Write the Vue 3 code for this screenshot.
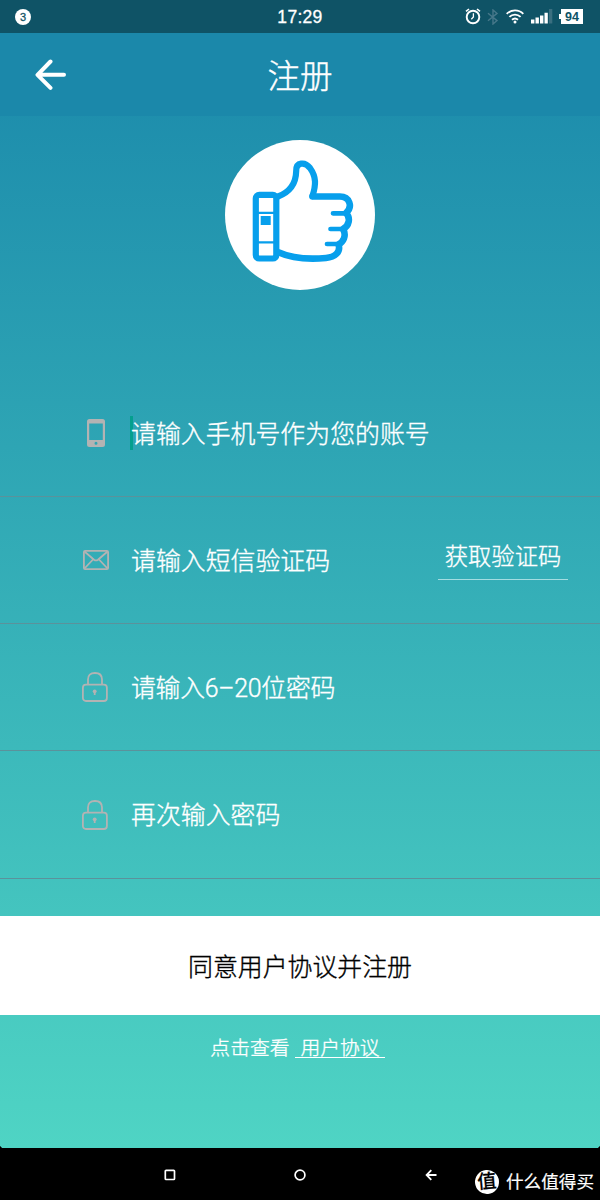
<template>
  <div class="screen">
    <header class="status-bar">
      <span class="notice">3</span>
      <span class="time">17:29</span>
      <div class="status-icons">
        <svg class="alarm" width="16" height="17" viewBox="0 0 16 17" fill="none" stroke="#fff">
          <circle cx="8" cy="9" r="6.3" stroke-width="1.9" />
          <path d="M1 3.4 4 1M15 3.4 12 1" stroke-width="1.6" />
          <path d="M8.4 5.2V9L6.3 11.3" stroke-width="1.3" />
        </svg>
        <svg class="bluetooth" width="12" height="16" viewBox="0 0 12 16" fill="none" stroke="#47788a" stroke-width="1.4">
          <path d="M1 4.2 10 11.6 6 15V1L10 4.4 1 11.8" />
        </svg>
        <svg class="wifi" width="18" height="15" viewBox="0 0 18 15" fill="none" stroke="#fff" stroke-width="1.9">
          <path d="M.7 4.8C5.3.2 12.7.2 17.3 4.8M3.4 7.9c3.2-3.1 8-3.1 11.2 0M6 10.8c1.8-1.6 4.2-1.6 6 0" />
          <circle cx="9" cy="13" r="1.5" fill="#fff" stroke="none" />
        </svg>
        <svg class="signal" width="22" height="15" viewBox="0 0 22 15">
          <path fill="#fff" d="M0 10.5h3.4v4H0zM4.5 8.6h3.4v5.9H4.5zM9 6.5h3.4v8H9zM13.5 3.8h3.3v10.7h-3.3z" />
          <path fill="#3a6f80" d="M18 0h3.3v14.5H18z" />
        </svg>
        <span class="battery">94</span>
      </div>
    </header>

    <nav class="title-bar">
      <svg class="back" width="32" height="32" viewBox="0 0 32 32" fill="none" stroke="#fff" stroke-width="4" stroke-linecap="round" stroke-linejoin="round">
        <path d="M15.5 2.5 2.5 15.8 15.5 28.8M3 15.8h26" />
      </svg>
      <h1>注册</h1>
    </nav>

    <main>
      <div class="logo">
        <svg width="150" height="150" viewBox="0 0 150 150" fill="none" stroke="#079fec" stroke-linecap="round" stroke-linejoin="round">
          <rect x="30.8" y="54.8" width="20.5" height="63.7" rx="3.5" stroke-width="6.2" />
          <path d="M33 72.8h17M33 102.3h17" stroke-width="2.2" />
          <path d="M35.7 76h10v9h-10z" fill="#079fec" stroke="none" />
          <path d="M53 56.5C65 52 71 43 71.2 31C71 22 80 21.5 85 28C91.5 37 91 45 87.500 56" stroke-width="6.200" />
          <path d="M87.500 56.500H114C125 56 128 67 121 73C126 78 124 86 118 89C122 96 118 102 113.500 104.500C116 112 110 117.300 101 118C83 119.500 67 118.500 54 112.500" stroke-width="6.600" />
          <path d="M119 73.300h-11M116 89h-10.500M112 104h-10" stroke-width="4.700" />
        </svg>
      </div>

      <form class="fields" @submit.prevent>
        <div v-for="field in fields" :key="field.text" class="field">
          <span class="field-icon">
            <svg v-if="field.icon === 'phone'" width="18" height="28" viewBox="0 0 18 28">
              <path fill="#b3b3b3" fill-rule="evenodd" d="M2.5 0h13Q18 0 18 2.5v23q0 2.5-2.5 2.5h-13Q0 28 0 25.5v-23Q0 0 2.5 0zM2.2 4.5v16.5h13.6V4.5zM9 22.8a1.5 1.5 0 1 0 0 3a1.5 1.5 0 1 0 0-3z" />
            </svg>
            <svg v-else-if="field.icon === 'mail'" width="26" height="20" viewBox="0 0 26 20" fill="none" stroke="#b3b3b3" stroke-width="1.8">
              <rect x=".9" y=".9" width="24.2" height="18.2" rx="1.2" />
              <path d="m1.5 1.5 9.5 8.2q2 1.5 4 0l9.5-8.2M1.500 18.500l8.500-9M24.500 18.500l-8.500-9" />
            </svg>
            <svg v-else class="lock" width="26" height="30" viewBox="0 0 26 30" fill="none" stroke="#b3b3b3" stroke-width="1.8">
              <rect x=".9" y="12.7" width="24" height="16.3" rx="3" />
              <path d="M6 12.700V7.500Q6 1 13 1t7 6.500v5.200" />
              <circle cx="12.700" cy="19.300" r="1.900" fill="#b3b3b3" stroke="none" />
              <path d="M12.700 19v4" />
            </svg>
          </span>
          <span class="placeholder" :class="{ focused: field.focused, tight: field.tight }">{{ field.text }}</span>
          <button v-if="field.action" type="button" class="code">{{ field.action }}</button>
        </div>
      </form>

      <button class="submit" type="button">同意用户协议并注册</button>
      <p class="terms">点击查看<a>用户协议</a></p>
    </main>

    <footer class="nav-bar">
      <svg width="12" height="12" viewBox="0 0 12 12" fill="none" stroke="#fff" stroke-width="1.7">
        <rect x="1.3" y="1.3" width="9.2" height="9.2" rx=".8" />
      </svg>
      <svg width="12" height="12" viewBox="0 0 12 12" fill="none" stroke="#fff" stroke-width="1.7">
        <circle cx="6" cy="6" r="4.9" />
      </svg>
      <svg width="12" height="12" viewBox="0 0 12 12" fill="none" stroke="#fff" stroke-width="1.8">
        <path d="M6.3 1.2 1.6 6l4.7 4.8M1.6 6h9.9" />
      </svg>
      <div class="watermark">
        <span class="mark">值</span>
        <span>什么值得买</span>
      </div>
    </footer>
  </div>
</template>

<script setup>
import { ref } from 'vue';

const fields = ref([
  { icon: 'phone', text: '请输入手机号作为您的账号', focused: true },
  { icon: 'mail', text: '请输入短信验证码', action: '获取验证码' },
  { icon: 'lock', text: '请输入6–20位密码', tight: true },
  { icon: 'lock', text: '再次输入密码' },
]);
</script>

<style>
body {
  margin: 0;
  background: #000;
}
</style>

<style scoped>
.screen {
  width: 600px;
  height: 1200px;
  display: flex;
  flex-direction: column;
  overflow: hidden;
  background: linear-gradient(#1987aa, #4fd4c4 1148px);
  color: #fff;
  font-family: "Liberation Sans", "Noto Sans CJK SC", sans-serif;
  font-weight: 300;
}

button {
  border: 0;
  padding: 0;
  background: none;
  color: inherit;
  font: inherit;
}

.status-bar {
  height: 33px;
  flex: none;
  display: grid;
  grid-template-columns: 1fr auto 1fr;
  align-items: center;
  padding: 0 16px 0 15px;
  background: #0f5366;
}

.notice {
  width: 16px;
  height: 16px;
  border-radius: 50%;
  background: #fff;
  color: #0f5366;
  font-size: 11px;
  font-weight: 400;
  line-height: 16px;
  text-align: center;
  -webkit-text-stroke: 0.3px #0f5366;
}

.time {
  padding-left: 1px;
  font-size: 17.5px;
  font-weight: 400;
  letter-spacing: 0.3px;
  line-height: 20px;
  -webkit-text-stroke: 0.3px #fff;
}

.status-icons {
  display: flex;
  justify-content: flex-end;
  align-items: center;
  margin-right: 1px;
}

.bluetooth {
  margin: 0 7px 0 6px;
}

.signal {
  margin: 0 8px 0 7px;
}

.battery {
  position: relative;
  width: 22px;
  height: 15px;
  background: #fff;
  color: #0f5366;
  font: bold 12.5px/16px "Liberation Sans", sans-serif;
  text-align: center;
}

.battery::before {
  content: "";
  position: absolute;
  left: -2px;
  top: 5px;
  width: 2px;
  height: 5px;
  background: #fff;
}

.title-bar {
  height: 83px;
  flex: none;
  display: grid;
  grid-template-columns: 1fr auto 1fr;
  align-items: center;
  padding: 0 35px;
  background: #1b88aa;
}

h1 {
  margin: 0;
  padding-top: 5px;
  font-size: 32.5px;
  font-weight: 300;
  line-height: 48px;
  -webkit-text-stroke: 0.4px #fff;
}

main {
  height: 1032px;
  flex: none;
  -webkit-text-stroke: 0.35px;
}

.logo {
  width: 150px;
  height: 150px;
  margin: 24px auto 80px;
  border-radius: 50%;
  background: #fff;
}

.field {
  height: 127px;
  box-sizing: border-box;
  display: flex;
  align-items: center;
  padding: 0 32px 0 82px;
  border-bottom: 1px solid #5b929b;
}

.field:last-child {
  height: 128px;
}

.field-icon {
  width: 27px;
  margin-right: 22px;
  display: flex;
  justify-content: center;
}

.lock {
  margin-right: 1px;
}

.placeholder {
  flex: 1;
  padding-top: 3px;
  font-family: Roboto, "Noto Sans CJK SC", sans-serif;
  font-size: 24.9px;
  line-height: 34px;
}

.tight {
  letter-spacing: -0.28px;
}

.focused {
  position: relative;
  z-index: 0;
}

.focused::before {
  content: "";
  position: absolute;
  z-index: -1;
  left: -1px;
  top: 1px;
  width: 3px;
  height: 34px;
  background: #049f8e;
}

.code {
  width: 130px;
  height: 46px;
  margin-bottom: 6px;
  border-bottom: 1px solid #a4dde1;
  font-size: 23.3px;
  line-height: 46px;
}

.submit {
  display: block;
  width: 100%;
  height: 99px;
  margin-top: 37px;
  padding-bottom: 2px;
  background: #fff;
  color: #000;
  font-size: 24.9px;
}

.terms {
  margin: 20px 0 0 -5px;
  display: flex;
  justify-content: center;
  font-size: 19.8px;
  line-height: 27px;
}

.terms a {
  height: 22px;
  margin-left: 5px;
  padding: 0 5px 0 6px;
  border-bottom: 1px solid #fff;
}

.nav-bar {
  position: relative;
  flex: 1;
  display: flex;
  justify-content: center;
  align-items: center;
  gap: 118.5px;
  padding-top: 2px;
  background: #000;
}

/* black behind the rounded bottom corners of the page */
.nav-bar::before {
  content: "";
  position: absolute;
  left: 0;
  right: 0;
  top: -4px;
  height: 4px;
  background:
    radial-gradient(circle at 4px 0, transparent 4px, #000 4.5px) left / 4px 4px no-repeat,
    radial-gradient(circle at 0 0, transparent 4px, #000 4.5px) right / 4px 4px no-repeat;
}

.watermark {
  position: absolute;
  right: 6px;
  bottom: 5px;
  display: flex;
  align-items: center;
  gap: 7px;
  font-size: 17.6px;
  font-weight: 400;
  line-height: 26px;
  -webkit-text-stroke: 0.2px;
}

.mark {
  width: 24px;
  height: 24px;
  border-radius: 50%;
  background: #fff;
  color: #000;
  font-size: 19px;
  font-weight: 500;
  line-height: 23px;
  text-align: center;
  transform: rotate(-5deg);
}
</style>
